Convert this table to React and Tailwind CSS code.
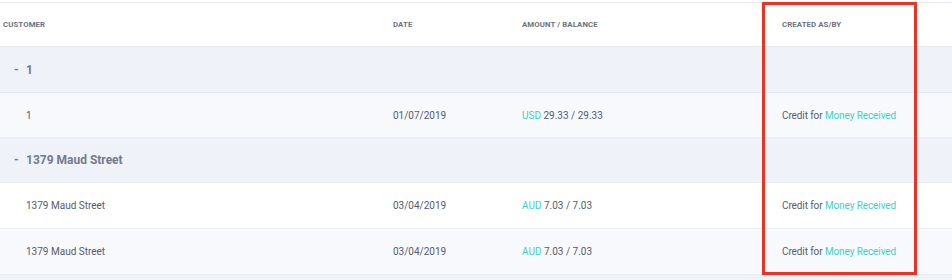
import React from "react";

const rows = [
  { type: "group", name: "1", bg: "bg-[#eff2f9]", h: "h-[46px]" },
  { type: "item", name: "1", date: "01/07/2019", cur: "USD", amt: "29.33 / 29.33", bg: "bg-[#f8f9fc]", h: "h-[45px]" },
  { type: "group", name: "1379 Maud Street", bg: "bg-[#eff2f9]", h: "h-[45px]" },
  { type: "item", name: "1379 Maud Street", date: "03/04/2019", cur: "AUD", amt: "7.03 / 7.03", bg: "bg-white", h: "h-[46px]" },
  { type: "item", name: "1379 Maud Street", date: "03/04/2019", cur: "AUD", amt: "7.03 / 7.03", bg: "bg-[#f8f9fc]", h: "h-[46px]" },
  { type: "group", name: "", bg: "bg-[#eff2f9]", h: "h-[40px]" },
];

export default function App() {
  return (
    <div className="relative w-[952px] h-[280px] overflow-hidden bg-white font-['Roboto',sans-serif]">
      <div className="h-[2px] bg-white" />
      {/* header */}
      <div className="grid grid-cols-[393px_129px_260px_1fr] items-center h-[45px] border-t border-b border-[#e8eaef] bg-white text-[7.8px] font-bold uppercase tracking-[0.1px] text-[#6b7280]">
        <div className="pl-[3px]">Customer</div>
        <div>Date</div>
        <div>Amount / Balance</div>
        <div>Created As/By</div>
      </div>

      {rows.map((r, i) =>
        r.type === "group" ? (
          <div key={i} className={`flex items-center ${r.h} ${r.bg} border-b border-[#e6e9ef] text-[12px] font-bold text-[#737b8b]`}>
            {r.name && (
              <>
                <span className="w-[26px] pl-[14px]">-</span>
                <span>{r.name}</span>
              </>
            )}
          </div>
        ) : (
          <div key={i} className={`grid grid-cols-[393px_129px_260px_1fr] items-center ${r.h} ${r.bg} border-b border-[#eceef3] text-[10px] text-[#555c6a]`}>
            <div className="pl-[26px]">{r.name}</div>
            <div>{r.date}</div>
            <div>
              <span className="text-[#3fcfc4]">{r.cur}</span> {r.amt}
            </div>
            <div className="tracking-[-0.1px]">
              Credit for <span className="text-[#3fcfc4]">Money Received</span>
            </div>
          </div>
        )
      )}

      {/* highlight annotation */}
      <div className="absolute left-[762px] top-[2px] w-[155px] h-[273px] border-[3px] border-[#ea3323]" />
    </div>
  );
}
